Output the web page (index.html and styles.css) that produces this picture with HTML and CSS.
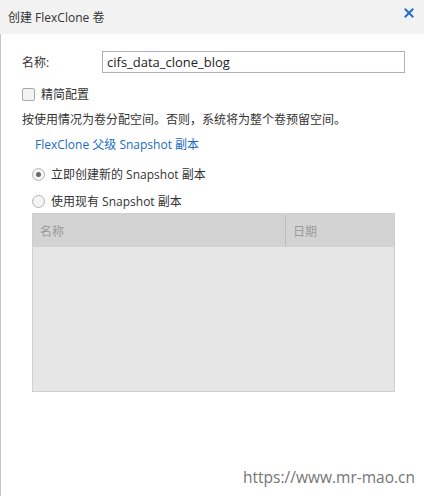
FILE: index.html
```html
<!DOCTYPE html>
<html lang="zh">
<head>
<meta charset="utf-8">
<title>创建 FlexClone 卷</title>
<link rel="stylesheet" href="styles.css">
</head>
<body>
<div class="dialog">
  <div class="header">
    <span class="title">创建 FlexClone 卷</span>
    <span class="close">
      <svg width="10" height="10" viewBox="0 0 10 10"><path d="M1.5 1.5L8.5 8.5M8.5 1.5L1.5 8.5" stroke="#1f6fd1" stroke-width="2" stroke-linecap="square"/></svg>
    </span>
  </div>
  <div class="body">
    <div class="row name-row">
      <label class="label">名称:</label>
      <div class="input">cifs_data_clone_blog</div>
    </div>
    <div class="row check-row">
      <span class="checkbox"></span>
      <span>精简配置</span>
    </div>
    <div class="row desc">按使用情况为卷分配空间。否则，系统将为整个卷预留空间。</div>
    <div class="row section-title">FlexClone 父级 Snapshot 副本</div>
    <div class="row radio-row first">
      <span class="radio checked"></span>
      <span>立即创建新的 Snapshot 副本</span>
    </div>
    <div class="row radio-row">
      <span class="radio"></span>
      <span>使用现有 Snapshot 副本</span>
    </div>
    <div class="table">
      <div class="thead">
        <div class="th th-name">名称</div>
        <div class="th th-date">日期</div>
      </div>
      <div class="tbody"></div>
    </div>
    <div class="watermark">https://www.mr-mao.cn</div>
  </div>
</div>
</body>
</html>
```

FILE: styles.css
```css
html, body {
  margin: 0;
  padding: 0;
  background: #ffffff;
}
body {
  font-family: "Open Sans", "Noto Sans CJK SC", sans-serif;
  font-size: 12px;
  color: #333333;
}
.dialog {
  width: 424px;
  height: 496px;
  display: flex;
  flex-direction: column;
  overflow: hidden;
}
.header {
  height: 34px;
  flex: none;
  background: #f2f2f2;
  display: flex;
  align-items: center;
  justify-content: space-between;
  padding: 0 10px 0 8px;
}
.title {
  font-size: 12px;
  color: #333333;
}
.close {
  display: flex;
  margin-top: -8px;
}
.body {
  flex: 1;
  border-left: 1px solid #c4c4c4;
  padding-left: 21px;
  display: flex;
  flex-direction: column;
}
.row {
  display: flex;
  align-items: center;
}
.name-row {
  margin-top: 17px;
  height: 22px;
}
.label {
  width: 80px;
}
.input {
  width: 297px;
  height: 20px;
  border: 1px solid #aeaec4;
  padding-left: 4px;
  font-size: 13px;
  line-height: 20px;
  color: #222222;
}
.check-row {
  margin-top: 11px;
  height: 20px;
  gap: 6px;
}
.checkbox {
  width: 11px;
  height: 11px;
  border: 1px solid #a9a9a9;
  border-radius: 2px;
  background: #f3f3f3;
}
.desc {
  margin-top: 5px;
  height: 20px;
}
.section-title {
  margin-top: 5px;
  height: 20px;
  margin-left: 13px;
  color: #1a6cc4;
}
.radio-row {
  margin-left: 10px;
  height: 20px;
  gap: 6px;
  margin-top: 7px;
}
.radio-row.first {
  margin-top: 10px;
}
.radio {
  width: 11px;
  height: 11px;
  border: 1px solid #b4b4b4;
  border-radius: 50%;
  background: #f4f4f4;
  display: flex;
  align-items: center;
  justify-content: center;
}
.radio.checked::after {
  content: "";
  width: 5px;
  height: 5px;
  border-radius: 50%;
  background: #6a6a6a;
}
.table {
  margin-top: 2px;
  margin-left: 10px;
  width: 363px;
  height: 179px;
  border: 1px solid #cfcfcf;
  box-sizing: border-box;
  display: flex;
  flex-direction: column;
}
.thead {
  height: 33px;
  background: #d3d3d3;
  display: flex;
  flex: none;
}
.th {
  color: #9a9a9a;
  display: flex;
  align-items: center;
  padding-left: 7px;
}
.th-name {
  width: 245px;
  border-right: 1px solid #bcbcbc;
  margin: 1px 0;
}
.th-date {
  flex: 1;
}
.tbody {
  flex: 1;
  background: #e6e6e6;
}
.watermark {
  margin-top: auto;
  margin-bottom: 8px;
  align-self: flex-end;
  margin-right: 9px;
  font-size: 15.5px;
  color: #757575;
}
```
